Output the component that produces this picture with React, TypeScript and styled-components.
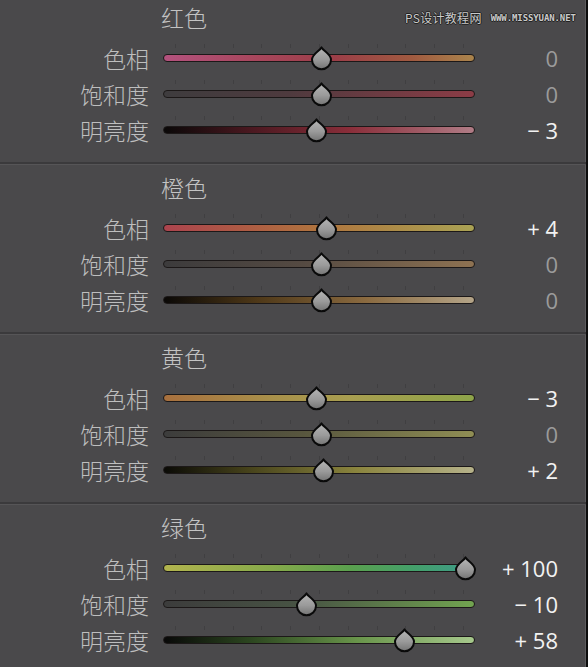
import React from "react";
import styled, { createGlobalStyle } from "styled-components";

const GlobalStyle = createGlobalStyle`
  html, body { margin: 0; padding: 0; background: #4a494b; }
  * { box-sizing: border-box; }
`;

const Panel = styled.div`
  position: relative;
  width: 588px;
  height: 667px;
  overflow: hidden;
  background: #4a494b;
  border-right: 2px solid #0d0d0d;
  box-shadow: inset -1px 0 0 #5c5b5d;
  font-family: "Noto Sans CJK SC", "Noto Sans", sans-serif;
`;

const Watermark = styled.div`
  position: absolute;
  top: 10px;
  left: 405px;
  display: flex;
  align-items: center;
  gap: 9px;
  color: #c9c9c9;
  text-shadow: 1px 0 0 #222, -1px 0 0 #222, 0 1px 0 #222, 0 -1px 0 #222;
`;

const WmCn = styled.span`
  font-family: "Noto Sans CJK SC", sans-serif;
  font-size: 12px;
  line-height: 16px;
  letter-spacing: 0.3px;
`;

const WmEn = styled.span`
  font-family: "DejaVu Sans Mono", monospace;
  font-size: 9px;
  font-weight: bold;
  line-height: 16px;
  letter-spacing: -0.1px;
`;

const Section = styled.section`
  height: 170px;
  display: flex;
  flex-direction: column;
`;

const Title = styled.div`
  height: 36px;
  line-height: 34px;
  padding-left: 161px;
  margin-bottom: 4px;
  font-size: 23px;
  font-weight: 300;
  color: #c3c3c3;
`;

const Row = styled.div`
  height: 36px;
  display: grid;
  grid-template-columns: 149px 312px 1fr;
  column-gap: 14px;
  align-items: center;
  padding-right: 28px;
`;

const Label = styled.div`
  text-align: right;
  font-size: 23px;
  font-weight: 300;
  line-height: 36px;
  color: #bebebe;
`;

const TrackArea = styled.div`
  position: relative;
  height: 8px;
`;

const Bar = styled.div<{ $grad: string }>`
  height: 8px;
  border-radius: 4px;
  border: 1.5px solid #1c1818;
  background: ${(p) => p.$grad};
`;

const Ticks = styled.div`
  position: absolute;
  left: 12px;
  top: -10px;
  width: 290px;
  height: 4px;
  background: repeating-linear-gradient(
    to right,
    #403f41 0px,
    #403f41 1px,
    transparent 1px,
    transparent 28.8px
  );
`;

const ThumbSvg = styled.svg`
  position: absolute;
  top: -8px;
  width: 23px;
  height: 24px;
  overflow: visible;
`;

const Value = styled.div<{ $zero: boolean }>`
  text-align: right;
  font-family: "Open Sans", "Noto Sans", sans-serif;
  font-size: 22px;
  line-height: 36px;
  color: ${(p) => (p.$zero ? "#9b9b9b" : "#f2f2f2")};
  white-space: pre;
`;

const Divider = styled.div`
  margin-top: 14px;
  height: 3px;
  background: linear-gradient(#3b3a3c 0 2px, #565557 2px 3px);
`;

type RowData = { label: string; value: number; grad: string };
type SectionData = { title: string; rows: RowData[] };

const sections: SectionData[] = [
  {
    title: "红色",
    rows: [
      {
        label: "色相",
        value: 0,
        grad: "linear-gradient(90deg,#b4527e 0%,#a8465c 30%,#9c3e48 55%,#a05a40 80%,#aa844c 100%)",
      },
      {
        label: "饱和度",
        value: 0,
        grad: "linear-gradient(90deg,#3e3c3e 0%,#4e3a3e 40%,#8c3c46 100%)",
      },
      {
        label: "明亮度",
        value: -3,
        grad: "linear-gradient(90deg,#0a0808 0%,#4a1820 28%,#8a2e3a 60%,#b07c86 100%)",
      },
    ],
  },
  {
    title: "橙色",
    rows: [
      {
        label: "色相",
        value: 4,
        grad: "linear-gradient(90deg,#ac444e 0%,#ae5a44 25%,#b0743e 50%,#ac8c48 75%,#aaa254 100%)",
      },
      {
        label: "饱和度",
        value: 0,
        grad: "linear-gradient(90deg,#3c3b3c 0%,#554a42 45%,#8e7252 100%)",
      },
      {
        label: "明亮度",
        value: 0,
        grad: "linear-gradient(90deg,#0a0806 0%,#4e3818 30%,#8a6a40 65%,#b4a488 100%)",
      },
    ],
  },
  {
    title: "黄色",
    rows: [
      {
        label: "色相",
        value: -3,
        grad: "linear-gradient(90deg,#a8703e 0%,#a8904a 35%,#a89e50 60%,#98a24a 85%,#8ea44a 100%)",
      },
      {
        label: "饱和度",
        value: 0,
        grad: "linear-gradient(90deg,#3c3c3c 0%,#58563e 45%,#908e54 100%)",
      },
      {
        label: "明亮度",
        value: 2,
        grad: "linear-gradient(90deg,#0a0a06 0%,#48441c 28%,#8a843e 62%,#b6b28a 100%)",
      },
    ],
  },
  {
    title: "绿色",
    rows: [
      {
        label: "色相",
        value: 100,
        grad: "linear-gradient(90deg,#b2b44e 0%,#86aa4a 35%,#5aa04e 60%,#44a06a 80%,#3e9a8a 100%)",
      },
      {
        label: "饱和度",
        value: -10,
        grad: "linear-gradient(90deg,#3c3c3c 0%,#485444 45%,#72a450 100%)",
      },
      {
        label: "明亮度",
        value: 58,
        grad: "linear-gradient(90deg,#080808 0%,#2c4620 28%,#68944a 62%,#a6c88c 100%)",
      },
    ],
  },
];

const formatValue = (v: number) => {
  if (v === 0) return "0";
  return v > 0 ? `+ ${v}` : `\u2212 ${Math.abs(v)}`;
};

const Thumb: React.FC<{ x: number }> = ({ x }) => (
  <ThumbSvg viewBox="0 0 23 24" style={{ left: x - 11.5 }}>
    <defs>
      <linearGradient id="thumbFill" x1="0" y1="0" x2="0" y2="1">
        <stop offset="0" stopColor="#b6b6b6" />
        <stop offset="0.55" stopColor="#9a9a9a" />
        <stop offset="1" stopColor="#737373" />
      </linearGradient>
    </defs>
    <path
      d="M11.5 1.4 C13.8 5.4 21 7.8 21 13.8 A9.5 9.5 0 0 1 2 13.8 C2 7.8 9.2 5.4 11.5 1.4 Z"
      fill="url(#thumbFill)"
      stroke="#0a0a0a"
      strokeWidth="2"
      strokeLinejoin="round"
    />
  </ThumbSvg>
);

const SliderRow: React.FC<{ row: RowData }> = ({ row }) => (
  <Row>
    <Label>{row.label}</Label>
    <TrackArea>
      <Ticks />
      <Bar $grad={row.grad} />
      <Thumb x={158 + row.value * 1.44} />
    </TrackArea>
    <Value $zero={row.value === 0}>{formatValue(row.value)}</Value>
  </Row>
);

export default function App() {
  return (
    <>
      <GlobalStyle />
      <Panel>
        {sections.map((s) => (
          <Section key={s.title}>
            <Title>{s.title}</Title>
            {s.rows.map((r) => (
              <SliderRow key={r.label} row={r} />
            ))}
            <Divider />
          </Section>
        ))}
        <Watermark>
          <WmCn>PS设计教程网</WmCn>
          <WmEn>WWW.MISSYUAN.NET</WmEn>
        </Watermark>
      </Panel>
    </>
  );
}
